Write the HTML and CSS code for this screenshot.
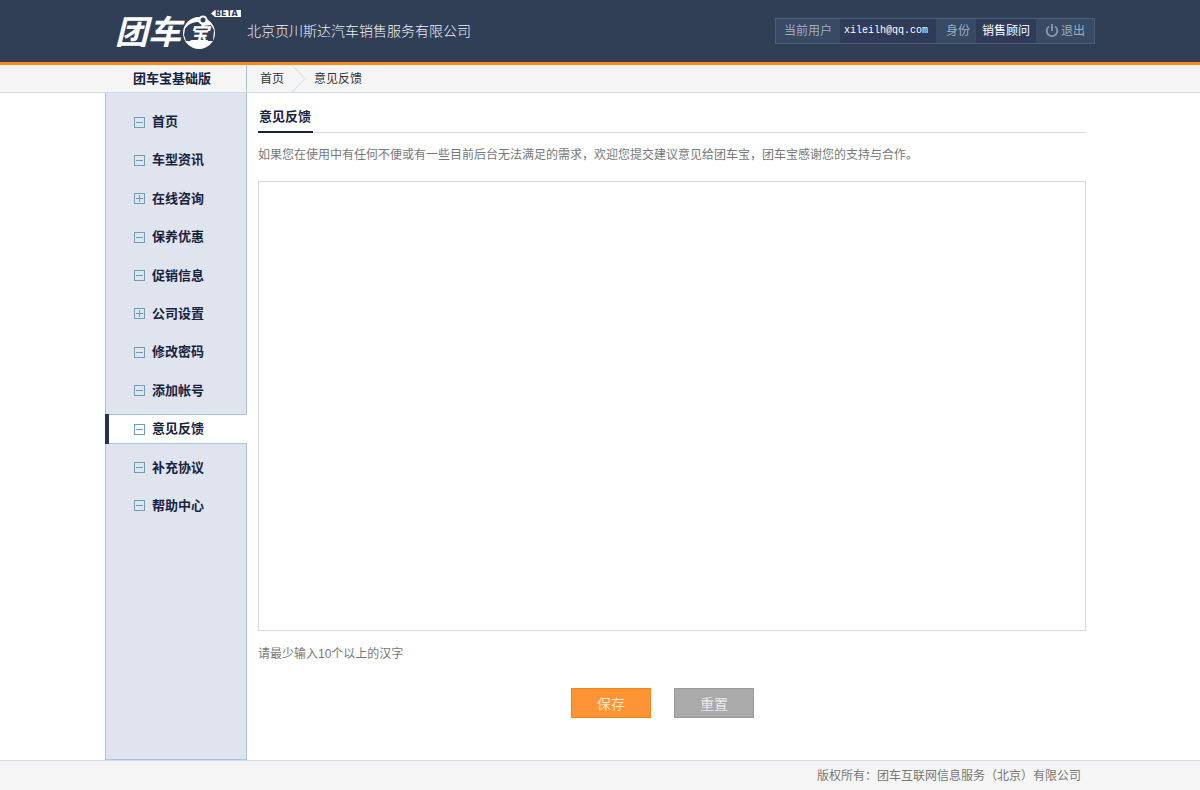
FILE: index.html
```html
<!DOCTYPE html>
<html lang="zh-CN">
<head>
<meta charset="utf-8">
<title>意见反馈 - 团车宝</title>
<link rel="stylesheet" href="styles.css">
</head>
<body>
<header class="header">
  <div class="wrap header-inner">
    <a class="logo" href="#" aria-label="团车宝">
      <svg width="132" height="62" viewBox="0 -8 132 62">
        <text class="logo-text" x="2" y="36">团车</text>
        <circle cx="86" cy="25" r="16" fill="#fff"/>
        <path d="M72 21c3-5 8-7 13-7l5 4 8-1 3 5-1 11H73l-2-6z" fill="#303e56"/>
        <text class="logo-badge" x="76" y="33">宝</text>
        <circle cx="90" cy="12" r="3.500" fill="#303e56" stroke="#fff" stroke-width="2"/>
        <path d="M98 5.500l4-3.500h26v7h-26z" fill="#fff"/>
        <text class="logo-beta" x="102" y="8">BETA</text>
      </svg>
    </a>
    <span class="company">北京页川斯达汽车销售服务有限公司</span>
    <div class="user">
      <span class="user-label">当前用户</span>
      <span class="user-value mail">xileilh@qq.com</span>
      <span class="user-label role">身份</span>
      <span class="user-value">销售顾问</span>
      <a class="logout" href="#">
        <svg width="14" height="14" viewBox="0 0 14 14" fill="none" stroke="#8493a8" stroke-width="2"><path d="M4 2.500a5.300 5.300 0 1 0 6 0M7 0v7"/></svg>退出</a>
    </div>
  </div>
</header>
<div class="bar">
  <div class="wrap bar-inner">
    <strong class="edition">团车宝基础版</strong>
    <nav class="crumbs" aria-label="当前位置">
      <a href="#">首页</a>
      <svg width="14" height="27" viewBox="0 0 14 27" fill="none" stroke="#cfdde8"><path d="M0 0l13 13.500L0 27"/></svg>
      <span>意见反馈</span>
    </nav>
  </div>
</div>
<div class="wrap body">
  <aside class="side">
    <ul class="menu">
      <li><a href="#"><i class="box"></i>首页</a></li>
      <li><a href="#"><i class="box"></i>车型资讯</a></li>
      <li><a href="#"><i class="box plus"></i>在线咨询</a></li>
      <li><a href="#"><i class="box"></i>保养优惠</a></li>
      <li><a href="#"><i class="box"></i>促销信息</a></li>
      <li><a href="#"><i class="box plus"></i>公司设置</a></li>
      <li><a href="#"><i class="box"></i>修改密码</a></li>
      <li><a href="#"><i class="box"></i>添加帐号</a></li>
      <li class="active"><a href="#" aria-current="page"><i class="box"></i>意见反馈</a></li>
      <li><a href="#"><i class="box"></i>补充协议</a></li>
      <li><a href="#"><i class="box"></i>帮助中心</a></li>
    </ul>
  </aside>
  <main class="main">
    <div class="title"><h1>意见反馈</h1></div>
    <form class="form">
      <label class="intro" for="feedback">如果您在使用中有任何不便或有一些目前后台无法满足的需求，欢迎您提交建议意见给团车宝，团车宝感谢您的支持与合作。</label>
      <textarea id="feedback" name="feedback" aria-describedby="hint"></textarea>
      <p class="hint" id="hint">请最少输入10个以上的汉字</p>
      <div class="actions">
        <button class="btn save" type="submit">保存</button>
        <button class="btn reset" type="reset">重置</button>
      </div>
    </form>
  </main>
</div>
<footer class="footer">
  <div class="wrap footer-inner">版权所有：团车互联网信息服务（北京）有限公司</div>
</footer>
</body>
</html>
```
FILE: styles.css
```css
* { box-sizing: border-box; }

body {
  margin: 0;
  min-height: 100vh;
  display: flex;
  flex-direction: column;
  background: #fff;
  color: #777;
  font: 12px/18px "Liberation Sans", "Noto Sans CJK SC", sans-serif;
}

a { color: inherit; text-decoration: none; }

.wrap { width: 100%; max-width: 990px; margin: 0 auto; }

.header { background: #303e56; border-bottom: 3px solid #ff8a18; }
.header-inner { display: flex; align-items: center; height: 62px; }
.logo { margin: 0 2px 0 8px; }
.logo svg { display: block; }
.logo-text, .logo-badge {
  font-family: "Noto Sans CJK SC", sans-serif;
  font-weight: bold;
  font-style: italic;
  fill: #fff;
}
.logo-text { font-size: 33px; }
.logo-badge { font-size: 20px; }
.logo-beta { font: bold 8px "DejaVu Sans", sans-serif; fill: #303e56; }
.company { color: #eef3fa; font-size: 14px; font-weight: 300; line-height: 20px; }

.user {
  display: flex;
  margin-left: auto;
  height: 26px;
  border: 1px solid #4c5f7c;
  background: #384a64;
  line-height: 24px;
}
.user-label { padding: 0 8px; color: #9dadc0; }
.role { padding: 0 6px 0 10px; }
.user-value { padding: 0 6px; background: #2f3b58; color: #fff; }
.mail { padding: 0 8px 0 4px; font-family: "Liberation Mono", monospace; font-size: 10px; }
.logout { display: flex; align-items: center; gap: 2px; padding: 0 9px; color: #9dadc0; }

.bar { background: #f5f5f5; border-bottom: 1px solid #cddde7; }
.bar-inner { display: flex; height: 27px; }
.edition {
  width: 142px;
  padding-right: 7px;
  border-right: 1px solid #a5c5d4;
  color: #17233d;
  font-size: 13px;
  line-height: 28px;
  text-align: center;
}
.crumbs { display: flex; gap: 8px; padding-left: 13px; color: #333; line-height: 29px; }

.body { display: flex; flex: 1; }
.side {
  flex: none;
  width: 142px;
  border: 1px solid #a5c5d4;
  border-top: 0;
  background: #e0e4ef;
}
.menu {
  display: flex;
  flex-direction: column;
  justify-content: space-between;
  height: 414px;
  margin: 14px -1px 0;
  padding: 0;
  list-style: none;
}
.menu a {
  display: flex;
  align-items: center;
  gap: 7px;
  height: 30px;
  padding-left: 29px;
  color: #17233d;
  font-size: 13px;
  font-weight: bold;
}
.menu .active a {
  padding-left: 25px;
  border: solid #a5c5d4;
  border-width: 1px 0;
  background: #fff;
}
.menu .active { border-left: 4px solid #26324d; }
.box {
  width: 11px;
  height: 11px;
  border: 1px solid #6ca0b8;
  background: linear-gradient(#6ca0b8, #6ca0b8) center / 7px 1px no-repeat;
}
.plus {
  background:
    linear-gradient(#6ca0b8, #6ca0b8) center / 7px 1px no-repeat,
    linear-gradient(#6ca0b8, #6ca0b8) center / 1px 7px no-repeat;
}

.main { flex: 1; min-width: 0; padding: 8px 9px 42px 11px; }
.title { display: flex; height: 32px; border-bottom: 1px solid #cddde7; }
.title h1 {
  height: 32px;
  margin: 0;
  padding: 0 2px 0 1px;
  border-bottom: 2px solid #17233d;
  color: #17233d;
  font-size: 13px;
  line-height: 32px;
}
.form { display: flex; flex-direction: column; }
.intro { margin: 13px 0 17px; }
textarea {
  display: block;
  width: 100%;
  height: 450px;
  padding: 8px;
  border: 1px solid #d9d9d9;
  background: #fff;
  color: #333;
  font: inherit;
  resize: none;
}
.hint { margin: 14px 0 25px; }
.actions { display: flex; justify-content: center; gap: 23px; padding-right: 19px; }
.btn {
  width: 80px;
  height: 30px;
  padding: 0;
  color: #fff;
  font: 300 14px/26px "Noto Sans CJK SC", sans-serif;
}
.save { border: 1px solid #f6820f; background: #ff9436; }
.reset { border: 1px solid #999; background: #aaa; }

.footer { border-top: 1px solid #cddde7; background: #f5f5f5; }
.footer-inner { padding: 6px 14px 5px; text-align: right; }
```
